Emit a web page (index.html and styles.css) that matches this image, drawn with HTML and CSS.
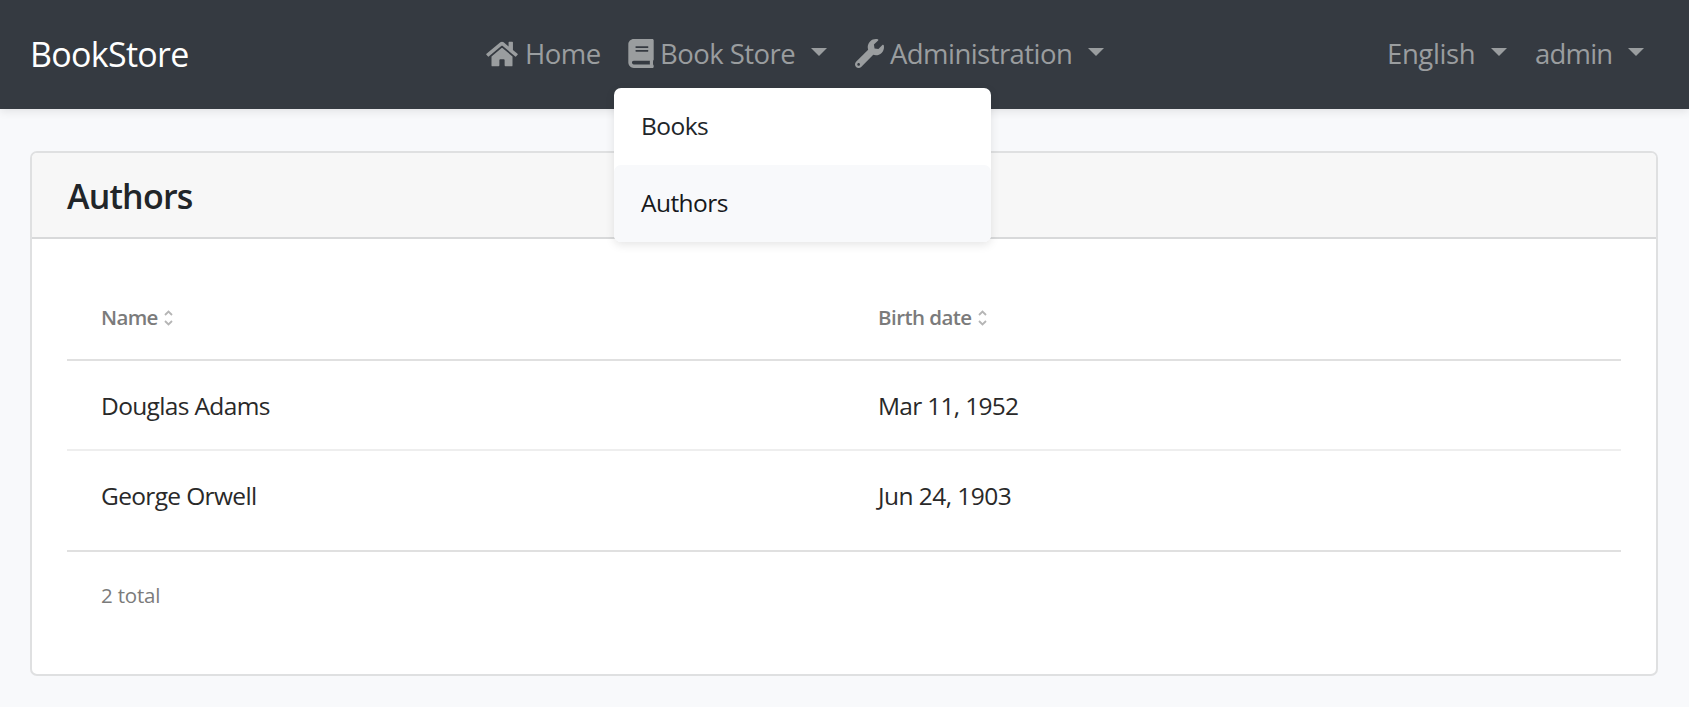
FILE: index.html
```html
<!DOCTYPE html>
<html lang="en">
<head>
<meta charset="utf-8">
<title>BookStore</title>
<link rel="stylesheet" href="styles.css">
</head>
<body>
<nav class="navbar">
  <a class="brand">BookStore</a>
  <ul class="nav nav-main">
    <li class="nav-item home">
      <svg class="icon-home" viewBox="0 0 576 512"><path d="M280.4 148.3L96 300.1V464a16 16 0 0 0 16 16l112-.3a16 16 0 0 0 16-16V368a16 16 0 0 1 16-16h64a16 16 0 0 1 16 16v95.600a16 16 0 0 0 16 16.100l112 .3a16 16 0 0 0 16-16V300L295.700 148.300a12.200 12.200 0 0 0-15.300 0zM571.600 251.500L488 182.600V44a12 12 0 0 0-12-12h-56a12 12 0 0 0-12 12v72.600L318.500 43a48 48 0 0 0-61 0L4.300 251.500a12 12 0 0 0-1.600 16.900l25.500 31A12 12 0 0 0 45.200 301l235.200-193.700a12.200 12.200 0 0 1 15.300 0L530.900 301a12 12 0 0 0 16.900-1.600l25.500-31a12 12 0 0 0-1.700-16.900z"/></svg>
      <span class="label">Home</span>
    </li>
    <li class="nav-item store">
      <svg class="icon-book" viewBox="0 0 448 512"><path d="M448 360V24c0-13.300-10.700-24-24-24H96C43 0 0 43 0 96v320c0 53 43 96 96 96h328c13.300 0 24-10.700 24-24v-16c0-7.500-3.500-14.300-8.900-18.700-4.200-15.400-4.200-59.300 0-74.700 5.400-4.300 8.900-11.100 8.900-18.600zM128 134c0-3.300 2.700-6 6-6h212c3.300 0 6 2.700 6 6v20c0 3.300-2.700 6-6 6H134c-3.300 0-6-2.700-6-6v-20zm0 64c0-3.300 2.700-6 6-6h212c3.300 0 6 2.700 6 6v20c0 3.300-2.700 6-6 6H134c-3.300 0-6-2.700-6-6v-20zm253.400 250H96c-17.700 0-32-14.300-32-32 0-17.600 14.400-32 32-32h285.400c-1.900 17.100-1.900 46.900 0 64z"/></svg>
      <span class="label">Book Store</span><i class="caret"></i>
      <div class="menu">
        <a class="menu-item books">Books</a>
        <a class="menu-item authors active">Authors</a>
      </div>
    </li>
    <li class="nav-item administration">
      <svg class="icon-wrench" viewBox="0 0 512 512"><path d="M507.700 109.100c-2.200-9-13.500-12.100-20.100-5.500l-74.400 74.400-67.900-11.300L334 98.900l74.400-74.400c6.600-6.600 3.400-17.900-5.700-20.200-47.400-11.700-99.600.9-136.600 37.900-39.600 39.600-50.600 97.100-34.100 147.200L18.700 402.800c-25 25-25 65.500 0 90.500s65.500 25 90.500 0l213.200-213.200c50.100 16.700 107.500 5.700 147.400-34.200 37.100-37.100 49.700-89.300 37.900-136.800zM64 472c-13.200 0-24-10.800-24-24 0-13.300 10.700-24 24-24s24 10.700 24 24c0 13.200-10.700 24-24 24z"/></svg>
      <span class="label">Administration</span><i class="caret"></i>
    </li>
  </ul>
  <ul class="nav nav-user">
    <li class="nav-item english"><span class="label">English</span><i class="caret"></i></li>
    <li class="nav-item admin"><span class="label">admin</span><i class="caret"></i></li>
  </ul>
</nav>
<main class="card">
  <header class="card-header"><h1 class="title">Authors</h1></header>
  <section class="card-body">
    <div class="row head">
      <div class="cell"><span class="th-name">Name</span><svg class="sort" viewBox="0 0 9 16"><path d="M1 5l3.500-3.500L8 5M1 11l3.500 3.500L8 11"/></svg></div>
      <div class="cell"><span class="th-date">Birth date</span><svg class="sort" viewBox="0 0 9 16"><path d="M1 5l3.500-3.500L8 5M1 11l3.500 3.500L8 11"/></svg></div>
    </div>
    <div class="row first">
      <div class="cell">Douglas Adams</div>
      <div class="cell date">Mar 11, 1952</div>
    </div>
    <div class="row last">
      <div class="cell">George Orwell</div>
      <div class="cell">Jun 24, 1903</div>
    </div>
    <footer class="total">2 total</footer>
  </section>
</main>
</body>
</html>
```
FILE: styles.css
```css
* { box-sizing: border-box; }
body {
  margin: 0;
  background: #f8f9fb;
  color: #212529;
  font-family: "Segoe UI", "Open Sans", "Noto Sans", sans-serif;
}
.navbar {
  position: relative;
  z-index: 1;
  display: flex;
  align-items: center;
  height: 109px;
  padding: 0 45px 2px 30px;
  background: #353a41;
  box-shadow: 0 2px 9px rgba(0, 0, 0, .1);
}
.brand {
  width: 456px;
  color: #fff;
  font-size: 34px;
  line-height: 50px;
  letter-spacing: -.7px;
}
.nav {
  display: flex;
  margin: 0;
  padding: 0;
  list-style: none;
}
.nav-user { margin-left: auto; gap: 28px; }
.nav-item {
  position: relative;
  display: flex;
  align-items: center;
  height: 60px;
  color: #9a9d9f;
  font-size: 27.500px;
  line-height: 40px;
  letter-spacing: -.55px;
  white-space: nowrap;
}
.nav-item svg { flex: none; fill: currentColor; }
.home { width: 142px; }
.store { width: 227px; }
.administration { width: 249px; }
.icon-home { width: 32px; height: 28px; margin-right: 7px; }
.icon-book { width: 26px; height: 29px; margin-right: 6px; }
.icon-wrench { width: 29px; height: 29px; margin-right: 6px; }
.caret {
  margin: -3px 0 0 auto;
  border: 8.500px solid transparent;
  border-top-color: currentColor;
  border-bottom: 0;
}
.store .caret { margin-right: 28px; }
.english { width: 120px; }
.english .label { letter-spacing: -.4px; }
.admin { width: 109px; }
.admin .label { letter-spacing: -.8px; }
.menu {
  position: absolute;
  top: 64px;
  left: -14px;
  width: 377px;
  border-radius: 7px;
  background: #fff;
  box-shadow: 0 3px 10px rgba(0, 0, 0, .1);
}
.menu-item {
  display: block;
  height: 77px;
  padding: 0 27px;
  border-radius: 7px;
  color: #212529;
  font-size: 24.500px;
  line-height: 75px;
  letter-spacing: -.55px;
}
.menu-item.active { background: #f8f9fb; color: #16181b; }
.card {
  height: 525px;
  margin: 42px 31px 0 30px;
  border: 2px solid #dfe0e1;
  border-radius: 7px;
  background: #fff;
}
.card-header {
  height: 86px;
  padding: 0 35px;
  border-bottom: 2px solid #d8d9da;
  border-radius: 5px 5px 0 0;
  background: #f7f7f7;
}
.title {
  margin: 0;
  font-size: 34px;
  font-weight: 600;
  line-height: 86px;
  letter-spacing: -.8px;
}
.card-body { padding: 42px 35px 0; }
.row {
  display: grid;
  grid-template-columns: 1fr 1fr;
  border-bottom: 2px solid #eee;
  color: #292929;
  font-size: 24.500px;
  letter-spacing: -.65px;
}
.cell { display: flex; align-items: center; padding-left: 34px; }
.date { letter-spacing: -.7px; }
.head {
  height: 80px;
  padding-bottom: 5px;
  border-color: #e0e0e0;
  color: #7b7b7b;
  font-size: 20.500px;
  font-weight: 600;
  line-height: 28px;
}
.th-name, .th-date { padding-bottom: 2px; }
.th-date { letter-spacing: -.55px; }
.sort {
  width: 9px;
  height: 16px;
  margin-left: 6px;
  fill: none;
  stroke: #b5b5b5;
  stroke-width: 1.800px;
}
.first { height: 90px; }
.last { height: 101px; padding-bottom: 11px; border-color: #e0e0e0; }
.last .cell + .cell { letter-spacing: -.55px; }
.total {
  padding-left: 34px;
  color: #7b7b7b;
  font-size: 20.500px;
  line-height: 87px;
  letter-spacing: -.2px;
}
```
